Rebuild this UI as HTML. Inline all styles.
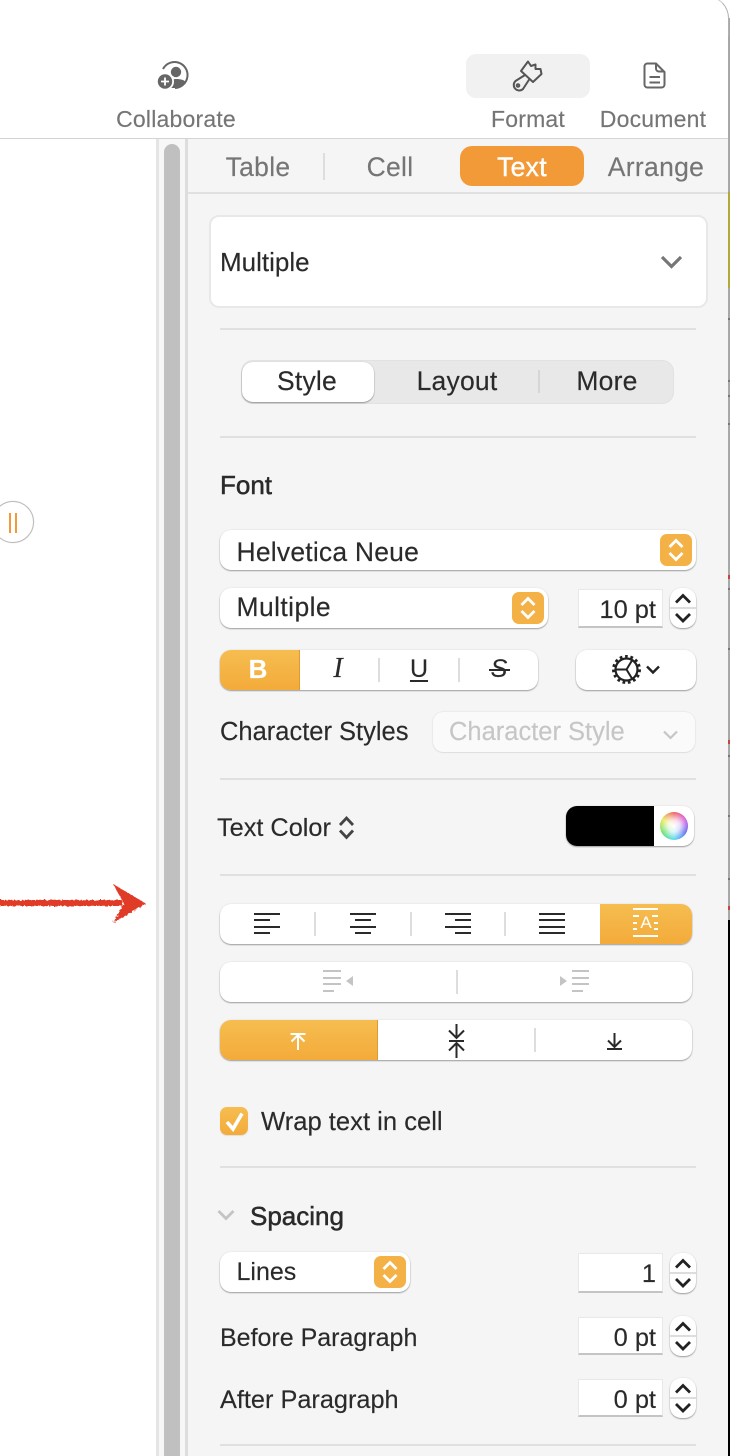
<!DOCTYPE html>
<html><head><meta charset="utf-8"><style>
html,body{margin:0;padding:0;background:#fff}
#p{position:relative;width:730px;height:1456px;overflow:hidden;background:#fff;font-family:"Liberation Sans",sans-serif;color:#2a2a2a}
#p div,#p svg{position:absolute}
.t{white-space:nowrap;font-size:25.500px;line-height:30px;margin-top:-15px;-webkit-text-stroke:.15px currentColor}
.m{transform:translateX(-50%)}
.g{color:#757575;font-size:26.500px;letter-spacing:.3px}
.h{color:#757575;font-size:23px;letter-spacing:.2px;top:118.500px}
.sg{font-size:26.500px;letter-spacing:.2px}
.b{font-size:26px;-webkit-text-stroke:.5px #2a2a2a}
.n{font-size:25.400px}
.c{background:#fff;border-radius:11px;box-shadow:0 1px 1.500px rgba(0,0,0,.35),0 0 1.500px rgba(0,0,0,.12)}
.o{background:linear-gradient(#f6bd50,#f3ab3a)}
.i{background:#fff;border:1px solid #e8e8e8;border-bottom:2px solid #c4c4c4;box-sizing:border-box;left:578px;width:85px}
.d{background:#e0e0e0;height:2px;left:220px;width:476px}
.s{background:#ddd;width:2px}
svg{overflow:visible}
</style></head><body><div id="p">
<svg width="0" height="0" style="left:0;top:0"><defs>
<symbol id="os" viewBox="0 0 32 32"><rect width="32" height="32" rx="7" fill="#f4b145"/><path d="M9.500 13L16 6.500L22.500 13M9.500 19L16 25.500L22.500 19" fill="none" stroke="#fff" stroke-width="2.800"/></symbol>
<symbol id="ss" viewBox="0 0 26 40"><path d="M0 20H26" stroke="#ddd" stroke-width="2"/><path d="M6 14.500L13 7.500L20 14.500M6 26L13 33L20 26" fill="none" stroke="#222" stroke-width="2.800"/></symbol>
</defs></svg>

<!-- window right edge -->
<div style="left:728px;top:18px;width:2px;height:1438px;background:#a8a8a8"></div>
<div style="left:728px;top:192px;width:2px;height:96px;background:#b5a83a"></div>
<div style="left:728px;top:318px;width:2px;height:2px;background:#777"></div>
<div style="left:728px;top:380px;width:2px;height:2px;background:#777"></div>
<div style="left:728px;top:395px;width:2px;height:2px;background:#777"></div>
<div style="left:728px;top:423px;width:2px;height:2px;background:#777"></div>
<div style="left:728px;top:588px;width:2px;height:2px;background:#777"></div>
<div style="left:728px;top:648px;width:2px;height:2px;background:#777"></div>
<div style="left:728px;top:755px;width:2px;height:2px;background:#777"></div>
<div style="left:728px;top:815px;width:2px;height:2px;background:#777"></div>
<div style="left:728px;top:878px;width:2px;height:2px;background:#777"></div>
<div style="left:728px;top:575px;width:2px;height:4px;background:#c9443a"></div>
<div style="left:728px;top:740px;width:2px;height:4px;background:#c9443a"></div>
<div style="left:728px;top:906px;width:2px;height:4px;background:#c9443a"></div>
<div style="left:728px;top:920px;width:2px;height:536px;background:#000"></div>
<div style="left:690px;top:-4px;width:39px;height:40px;border-top-right-radius:22px;border-top:1.500px solid #ccc;border-right:1.500px solid #b0b0b0;box-sizing:border-box"></div>

<!-- left area -->
<div style="left:156px;top:139px;width:32px;height:1317px;background:#f7f7f7"></div>
<div style="left:156px;top:139px;width:3px;height:1317px;background:#e5e5e5"></div>
<div style="left:164px;top:144px;width:16px;height:1320px;border-radius:8px;background:#c0c0c0"></div>
<div style="left:185px;top:139px;width:3px;height:1317px;background:#ddd"></div>

<!-- inspector -->
<div style="left:188px;top:139px;width:540px;height:1317px;background:#f5f5f5"></div>
<div style="left:0;top:137.500px;width:728px;height:1.500px;background:#d4d4d4"></div>
<div style="left:188px;top:192px;width:540px;height:2px;background:#e0e0e0"></div>

<!-- toolbar -->
<svg style="left:155px;top:58px" width="40" height="34" viewBox="155 58 40 34">
<path d="M163 69A13 13 0 1 1 175 88" fill="none" stroke="#666" stroke-width="2"/>
<circle cx="176" cy="72" r="5.200" fill="#666"/><path d="M168 88C168 81 172 79 176 79C181 79 185 80 186 83C183 86 179 88 175 88Z" fill="#666"/>
<circle cx="165" cy="81.500" r="9" fill="#fff"/><circle cx="165" cy="81.500" r="7.200" fill="#666"/><path d="M161 81.500H169M165 77.500V85.500" stroke="#fff" stroke-width="1.800"/>
</svg>
<div class="t h m" style="left:176px">Collaborate</div>
<div style="left:466px;top:54px;width:124px;height:44px;border-radius:10px;background:#f1f1f1"></div>
<svg style="left:510px;top:56px" width="36" height="38" viewBox="510 56 36 38"><g fill="none" stroke="#555" stroke-width="2" stroke-linejoin="round"><path d="M521 71L528 61.500L531 66L535.500 64.500L535.500 69L540.500 69L541.500 74L533 82Z"/><path d="M525 75L515.500 81A5 5 0 1 0 523 89L529.500 79"/><circle cx="518" cy="85.500" r="1.300"/></g></svg>
<div class="t h m" style="left:528px">Format</div>
<svg style="left:640px;top:60px" width="30" height="30" viewBox="640 60 30 30"><path d="M647.500 63.500H656L664.500 72V84.500A3 3 0 0 1 661.500 87.500H647.500A3 3 0 0 1 644.500 84.500V66.500A3 3 0 0 1 647.500 63.500ZM656 63.500V68.500A3 3 0 0 0 659 71.500H664.500M649.500 77H660M649.500 82.500H660" fill="none" stroke="#666" stroke-width="2"/></svg>
<div class="t h m" style="left:653px">Document</div>

<!-- tabs -->
<div class="t g m" style="left:258px;top:167px">Table</div>
<div class="s" style="left:323px;top:153px;height:27px"></div>
<div class="t g m" style="left:390px;top:167px">Cell</div>
<div style="left:460px;top:146px;width:124px;height:40px;border-radius:12px;background:#f39a38"></div>
<div class="t g m" style="left:522px;top:167px;color:#fff;-webkit-text-stroke:.4px #fff">Text</div>
<div class="t g m" style="left:656px;top:167px">Arrange</div>

<!-- Multiple box -->
<div style="left:208.500px;top:214.500px;width:499px;height:93px;box-sizing:border-box;background:#fff;border:2px solid #e8e8e8;border-radius:10px"></div>
<div class="t" style="left:220px;top:262px;font-size:26px">Multiple</div>
<svg style="left:655px;top:250px" width="34" height="24" viewBox="655 250 34 24"><path d="M662 257L671.500 266.500L681 257" fill="none" stroke="#777" stroke-width="3.200"/></svg>
<div class="d" style="top:328px"></div>

<!-- segmented -->
<div style="left:241px;top:360px;width:433px;height:44px;border-radius:12px;background:#e8e8e8;box-shadow:inset 0 0 0 1px #e2e2e2"></div>
<div class="c" style="left:242px;top:362px;width:132px;height:40px"></div>
<div class="t sg m" style="left:307px;top:381px">Style</div>
<div class="t sg m" style="left:457px;top:381px">Layout</div>
<div class="s" style="left:538px;top:370px;height:23px;background:#d6d6d6"></div>
<div class="t sg m" style="left:607px;top:381px">More</div>
<div class="d" style="top:436px"></div>

<div class="t b" style="left:220px;top:485px">Font</div>

<!-- font selects -->
<div class="c" style="left:220px;top:530px;width:476px;height:40px"></div>
<div class="t" style="left:236.500px;top:552px;font-size:26.500px;letter-spacing:.2px">Helvetica Neue</div>
<svg style="left:660px;top:534px" width="32" height="32"><use href="#os"/></svg>
<div class="c" style="left:220px;top:588px;width:328px;height:40px"></div>
<div class="t" style="left:236.500px;top:607px;font-size:26.500px;letter-spacing:.4px">Multiple</div>
<svg style="left:512px;top:592px" width="32" height="32"><use href="#os"/></svg>
<div class="i" style="top:589px;height:39px"></div>
<div class="t n" style="right:74px;top:610px">10 pt</div>
<div class="c" style="left:670px;top:588px;width:26px;height:40px"></div>
<svg style="left:670px;top:588px" width="26" height="40"><use href="#ss"/></svg>

<!-- BIUS -->
<div class="c" style="left:220px;top:650px;width:318px;height:40px"></div>
<div class="o" style="left:220px;top:650px;width:80px;height:40px;border-radius:11px 0 0 11px;border-right:1px solid #df9a30;box-sizing:border-box"></div>
<div class="t m" style="left:258px;top:669px;color:#fff;font-weight:bold;font-size:26px">B</div>
<div class="t m" style="left:338px;top:669px;font-family:'Liberation Serif',serif;font-style:italic;font-size:28px">I</div>
<div class="s" style="left:378px;top:658px;height:24px"></div>
<div class="t m" style="left:419px;top:669px;font-size:25px;text-decoration:underline;text-underline-offset:3px">U</div>
<div class="s" style="left:458px;top:658px;height:24px"></div>
<div class="t m" style="left:499px;top:669px;font-style:italic;font-size:25px">S</div>
<div style="left:489px;top:669px;width:21px;height:1.500px;background:#2a2a2a"></div>
<div class="c" style="left:576px;top:650px;width:120px;height:40px"></div>
<svg style="left:606px;top:650px" width="60" height="40" viewBox="606 650 60 40"><circle cx="626.500" cy="669.500" r="11" fill="none" stroke="#222" stroke-width="2.200"/><circle cx="626.500" cy="669.500" r="13" fill="none" stroke="#222" stroke-width="3" stroke-dasharray="2.700 2.700"/><path d="M616 669.500H626.500L632 660.500M626.500 669.500L632 678.500" fill="none" stroke="#222" stroke-width="2"/><path d="M647 666.500L653 672.500L659 666.500" fill="none" stroke="#222" stroke-width="2.400"/></svg>

<div class="t" style="left:220px;top:732px">Character Styles</div>
<div style="left:433px;top:712px;width:262px;height:40px;border-radius:10px;background:#fafafa;box-shadow:0 0 1.500px rgba(0,0,0,.15),0 1px 1px rgba(0,0,0,.06)"></div>
<div class="t" style="left:449px;top:732px;color:#c6c6c6">Character Style</div>
<svg style="left:660px;top:726px" width="20" height="16" viewBox="660 726 20 16"><path d="M664 731.500L670.500 738L677 731.500" fill="none" stroke="#c6c6c6" stroke-width="2.200"/></svg>
<div class="d" style="top:778px"></div>

<!-- text color -->
<div class="t" style="left:217px;top:828px;font-size:25.300px">Text Color</div>
<svg style="left:336px;top:814px" width="20" height="28" viewBox="336 814 20 28"><path d="M340 825L346.500 818L353 825M340 830.500L346.500 837.500L353 830.500" fill="none" stroke="#444" stroke-width="2.800"/></svg>
<div class="c" style="left:566px;top:806px;width:128px;height:40px;border-radius:11px"></div>
<div style="left:566px;top:806px;width:88px;height:40px;background:#000;border-radius:11px 0 0 11px"></div>
<div style="left:660px;top:812px;width:28px;height:28px;border-radius:50%;background:radial-gradient(circle,#fff 0,rgba(255,255,255,.8) 30%,rgba(255,255,255,0) 72%),conic-gradient(#f05a5a,#d05ae0,#5a6af0,#50d8f0,#60e060,#e8e850,#f05a5a)"></div>
<div class="d" style="top:874px"></div>

<!-- arrow -->
<svg style="left:0;top:875px" width="155" height="55" viewBox="0 875 155 55"><defs><filter id="r" x="-5%" y="-30%" width="110%" height="160%"><feTurbulence type="fractalNoise" baseFrequency=".5" numOctaves="2" seed="3"/><feDisplacementMap in="SourceGraphic" scale="3"/></filter></defs><g filter="url(#r)" fill="#e03a27"><path d="M0 900H122V906H0Z"/><path d="M113 884L146 903.500L113 923L124 903.500Z"/></g></svg>

<!-- pause circle -->
<div style="left:-8px;top:501px;width:42px;height:42px;box-sizing:border-box;border-radius:50%;background:#fff;border:1px solid #bbb;box-shadow:0 0 1px rgba(0,0,0,.2)"></div>
<div style="left:9px;top:513px;width:2px;height:20px;background:#f39a38"></div>
<div style="left:15px;top:513px;width:2px;height:20px;background:#f39a38"></div>

<!-- align -->
<div class="c" style="left:220px;top:904px;width:472px;height:40px"></div>
<div class="o" style="left:600px;top:904px;width:92px;height:40px;border-radius:0 11px 11px 0"></div>
<svg style="left:240px;top:905px" width="450" height="40" viewBox="240 905 450 40" fill="none" stroke="#2a2a2a" stroke-width="2">
<path d="M254 914H280M254 920H270M254 927H280M254 933H270"/>
<path d="M350 914H376M355 920H371M350 927H376M355 933H371"/>
<path d="M445 914H471M455 920H471M445 927H471M455 933H471"/>
<path d="M539 914H565M539 920H565M539 927H565M539 933H565"/>
<g stroke="#fff"><path d="M633 909H658M633 936H658"/><path d="M633 916H639M652 916H658M633 923H637M654 923H658M633 929H637M654 929H658"/></g>
</svg>
<div class="m" style="left:646px;top:914px;color:#fff;font-size:17px;line-height:18px">A</div>
<div class="s" style="left:314px;top:912px;height:24px"></div>
<div class="s" style="left:410px;top:912px;height:24px"></div>
<div class="s" style="left:504px;top:912px;height:24px"></div>

<!-- indent -->
<div class="c" style="left:220px;top:962px;width:472px;height:40px"></div>
<svg style="left:320px;top:965px" width="272" height="32" viewBox="320 965 272 32" fill="none" stroke="#c4c4c4" stroke-width="2">
<path d="M323 971H341M323 978H341M323 984H341M323 991H334"/><path d="M353 976V986L346 981Z" fill="#c4c4c4" stroke="none"/>
<path d="M572 971H589M572 978H589M572 984H589M572 991H583"/><path d="M560 976V986L567 981Z" fill="#c4c4c4" stroke="none"/>
</svg>
<div class="s" style="left:456px;top:970px;height:24px"></div>

<!-- valign -->
<div class="c" style="left:220px;top:1020px;width:472px;height:40px"></div>
<div class="o" style="left:220px;top:1020px;width:158px;height:40px;border-radius:11px 0 0 11px;border-right:1px solid #df9a30;box-sizing:border-box"></div>
<svg style="left:285px;top:1022px" width="345" height="38" viewBox="285 1022 345 38" fill="none" stroke-width="2">
<path d="M290.500 1034H305.500M298 1050V1035M291.500 1041.500L298 1035L304.500 1041.500" stroke="#fff"/>
<g stroke="#2a2a2a"><path d="M449 1041H464M449 1030.500L456.500 1038L464 1030.500M456.500 1038V1024M449 1050.500L456.500 1043L464 1050.500M456.500 1043V1058"/>
<path d="M607 1049H622M614.500 1033V1047M608 1040.500L614.500 1047L621 1040.500"/></g>
</svg>
<div class="s" style="left:534px;top:1028px;height:24px"></div>

<!-- wrap -->
<div class="o" style="left:220px;top:1107px;width:28px;height:28px;border-radius:7px;box-shadow:0 1px 1px rgba(0,0,0,.1)"></div>
<svg style="left:220px;top:1107px" width="28" height="28"><path d="M7 15L13 22L22 6.500" fill="none" stroke="#fff" stroke-width="3.600"/></svg>
<div class="t" style="left:261px;top:1122px;font-size:25.600px">Wrap text in cell</div>
<div class="d" style="top:1166px"></div>

<!-- spacing -->
<svg style="left:214px;top:1206px" width="24" height="20" viewBox="214 1206 24 20"><path d="M218.500 1211L226 1218.500L233.500 1211" fill="none" stroke="#c4c4c4" stroke-width="2.800"/></svg>
<div class="t b" style="left:250px;top:1216px">Spacing</div>
<div class="c" style="left:220px;top:1252px;width:190px;height:40px"></div>
<div class="t" style="left:236.500px;top:1272px;font-size:25px">Lines</div>
<svg style="left:374px;top:1256px" width="32" height="32"><use href="#os"/></svg>
<div class="i" style="top:1253px;height:40px"></div>
<div class="t n" style="right:74px;top:1274px">1</div>
<div class="c" style="left:670px;top:1253px;width:26px;height:40px"></div>
<svg style="left:670px;top:1253px" width="26" height="40"><use href="#ss"/></svg>

<div class="t" style="left:220px;top:1338px;font-size:25px">Before Paragraph</div>
<div class="i" style="top:1317px;height:38px"></div>
<div class="t n" style="right:74px;top:1338px">0 pt</div>
<div class="c" style="left:670px;top:1316px;width:26px;height:40px"></div>
<svg style="left:670px;top:1316px" width="26" height="40"><use href="#ss"/></svg>

<div class="t" style="left:220px;top:1400px;font-size:25.300px">After Paragraph</div>
<div class="i" style="top:1379px;height:38px"></div>
<div class="t n" style="right:74px;top:1400px">0 pt</div>
<div class="c" style="left:670px;top:1378px;width:26px;height:40px"></div>
<svg style="left:670px;top:1378px" width="26" height="40"><use href="#ss"/></svg>
<div class="d" style="top:1444px"></div>
</div></body></html>
